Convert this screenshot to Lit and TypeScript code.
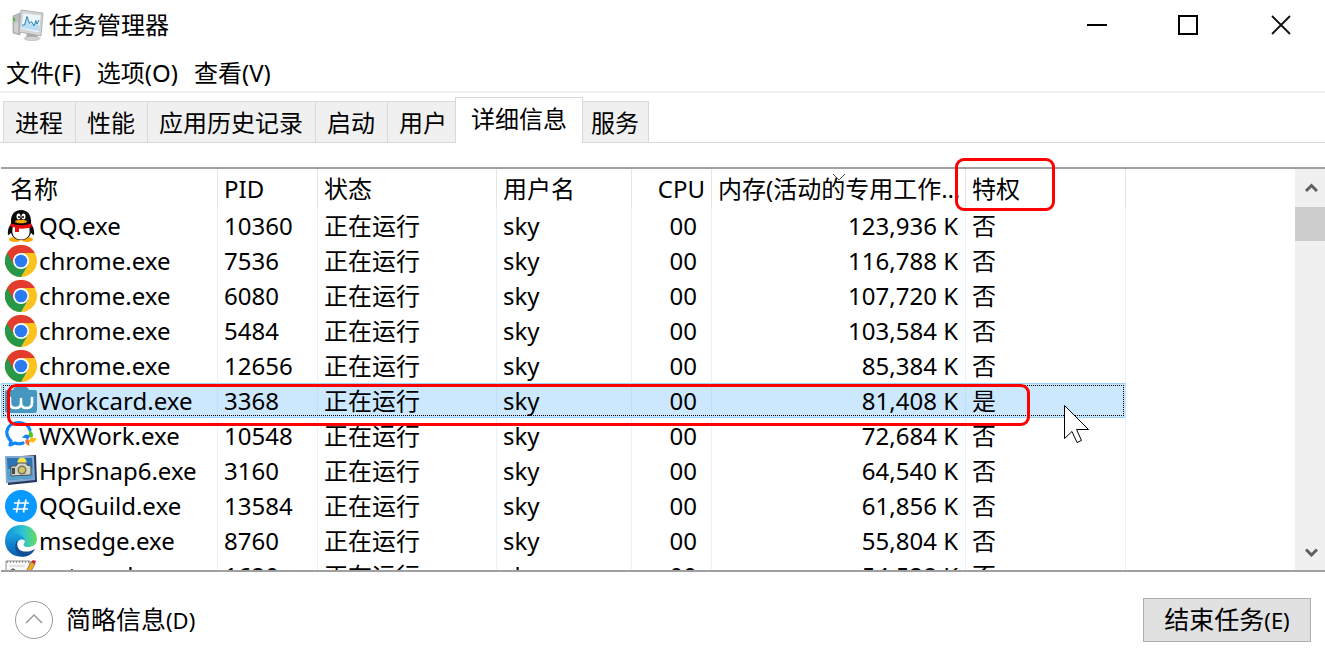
import { LitElement, html, css, svg } from "lit";
import { customElement, property, state } from "lit/decorators.js";
import { classMap } from "lit/directives/class-map.js";

interface Proc {
  icon: string;
  name: string;
  pid: string;
  memory: string;
  elevated: boolean;
}

const PROCESSES: Proc[] = [
  { icon: "qq", name: "QQ.exe", pid: "10360", memory: "123,936 K", elevated: false },
  { icon: "chrome", name: "chrome.exe", pid: "7536", memory: "116,788 K", elevated: false },
  { icon: "chrome", name: "chrome.exe", pid: "6080", memory: "107,720 K", elevated: false },
  { icon: "chrome", name: "chrome.exe", pid: "5484", memory: "103,584 K", elevated: false },
  { icon: "chrome", name: "chrome.exe", pid: "12656", memory: "85,384 K", elevated: false },
  { icon: "workcard", name: "Workcard.exe", pid: "3368", memory: "81,408 K", elevated: true },
  { icon: "wxwork", name: "WXWork.exe", pid: "10548", memory: "72,684 K", elevated: false },
  { icon: "snap", name: "HprSnap6.exe", pid: "3160", memory: "64,540 K", elevated: false },
  { icon: "guild", name: "QQGuild.exe", pid: "13584", memory: "61,856 K", elevated: false },
  { icon: "edge", name: "msedge.exe", pid: "8760", memory: "55,804 K", elevated: false },
  { icon: "note", name: "notepad.exe", pid: "1620", memory: "54,528 K", elevated: false },
];

const ICONS: Record<string, unknown> = {
  qq: svg`
    <ellipse cx="10" cy="29.500" rx="6" ry="2.500" fill="#f9a800"/><ellipse cx="22" cy="29.500" rx="6" ry="2.500" fill="#f9a800"/>
    <path d="M6 14 Q2 19 3 25 Q5 25 7 21ZM26 14 Q30 19 29 25 Q27 25 25 21Z" fill="#0a0a0a"/>
    <path d="M16 0C9 0 6 5 6 11V19C5 25 9 30 16 30S27 25 26 19V11C26 5 23 0 16 0Z" fill="#0a0a0a"/>
    <path d="M8 16H24Q27 29 16 29.500Q5 29 8 16Z" fill="#fff"/>
    <ellipse cx="13.500" cy="6.500" rx="2" ry="3" fill="#fff"/><ellipse cx="18.500" cy="6.500" rx="2" ry="3" fill="#fff"/>
    <circle cx="14" cy="7" r="1" fill="#000"/><circle cx="18" cy="7" r="1" fill="#000"/>
    <ellipse cx="16" cy="11.500" rx="6" ry="1.700" fill="#f9a800"/>
    <path d="M5.500 13.500Q16 17 26.500 13.500V17.500Q20 19 14 18.500V22H10V17.500L5.500 16.500Z" fill="#e60f0f"/>`,
  chrome: svg`
    <circle cx="16" cy="16" r="16" fill="#fcc31e"/>
    <path d="M2.100 8A16 16 0 0 0 16 32L22.900 20 16 16Z" fill="#269847"/>
    <path d="M2.100 8A16 16 0 0 1 29.900 8H16V16L9.100 20Z" fill="#e33b2e"/>
    <circle cx="16" cy="16" r="8" fill="#fff"/><circle cx="16" cy="16" r="6.300" fill="#2a7bef"/>`,
  workcard: svg`
    <path d="M2 5H8Q9 2 12 2H20Q23 2 24 5H30Q32 5 32 7V25Q32 28 29 28H3Q0 28 0 25V7Q0 5 2 5Z" fill="#4597bf"/>
    <path d="M5 13V18Q5 23 10.500 23T16 18V14M16 18Q16 23 21.500 23T27 18V13" fill="none" stroke="#fff" stroke-width="2.600" stroke-linecap="round"/>`,
  wxwork: svg`
    <path d="M25 10C22 0 4 0 2 11C1 16 4 19 6 21L5 25L10 23Q14 24.500 18 23" fill="none" stroke="#1186f5" stroke-width="3.200" stroke-linecap="round" stroke-linejoin="round"/>
    <path d="M24 10Q30 13 27 18L23 16Q25 13 24 10Z" fill="#4fc51f"/><path d="M32 18Q29 25 24 21L26 17Q29 19 32 18Z" fill="#fdbb0a"/>
    <path d="M25 26Q18 24 21 19L25 21Q23 23 25 26Z" fill="#fc6c25"/><path d="M17 18Q20 12 25 16L23 20Q20 17 17 18Z" fill="#1784ef"/>`,
  snap: svg`
    <path d="M2 2 31 0 32 27 3 30Z" fill="#26375c"/><path d="M0 1 29 1 30 25 1 28Z" fill="#82a8d0"/>
    <path d="M2 3H27L28 23 3 25Z" fill="#2c74b4"/><path d="M2 14H28V23L3 25Z" fill="#54a4cf"/>
    <circle cx="17" cy="7" r="4.500" fill="#ffe34a"/><path d="M6 11H11L13 8H21L22 10 26 11V20L6 21Z" fill="#d7d3c1" stroke="#47515a"/>
    <circle cx="17" cy="15" r="4.500" fill="#6d7671"/><circle cx="17" cy="15" r="3" fill="#d6c45c"/><path d="M7 13H10V19H7Z" fill="#424b50"/>`,
  guild: svg`<circle cx="16" cy="16" r="16" fill="#0999ff"/>
    <path d="M14 9.500 11.500 22.500M21 9.500 18.500 22.500M9 13H24M8 19H23" fill="none" stroke="#fff" stroke-width="1.700"/>`,
  edge: svg`
    <defs><linearGradient id="edge-top"><stop stop-color="#1690df"/><stop offset=".55" stop-color="#2cc3d4"/><stop offset="1" stop-color="#68dc5f"/></linearGradient>
    <linearGradient id="edge-left" x2="0" y2="1"><stop stop-color="#1aa5e4"/><stop offset="1" stop-color="#075cb0"/></linearGradient></defs>
    <path d="M0 15C1 5 8 0 16 0C26 0 32 7 32 14C32 20 27 22 23 22C19 22 17 20 20 17C19 9 7 7 0 15Z" fill="url(#edge-top)"/>
    <path d="M0 16C1 8 11 7 17 11Q20 13 20 16C16 12 10 17 12 23Q14 30 21 31C9 34 0 26 0 16Z" fill="url(#edge-left)"/>
    <path d="M13 15C9 27 22 29 30 24C27 30 21 33 16 31C9 28 9 18 13 15Z" fill="#124f96"/>`,
  note: svg`
    <path d="M1 1H25V31H1Z" fill="#fafafa" stroke="#8c8c8c"/><path d="M2 2H25" stroke="#777" stroke-width="1.500" stroke-dasharray="1 2"/>
    <path d="M4 6H20" stroke="#ccc"/><circle cx="8" cy="11" r="2" fill="none" stroke="#222"/>
    <path d="M26 2 30 4 22 19 18 20 19 15Z" fill="#eba928" stroke="#765018" stroke-width=".6"/><path d="M26 2 30 4 31 1 28 0Z" fill="#b92d38"/>`,
};

@customElement("process-icon")
export class ProcessIcon extends LitElement {
  static styles = css`
    :host { display: block; width: 32px; height: 32px; flex: none; }
    .glyph { display: block; width: 100%; height: 100%; }
  `;
  @property() kind = "chrome";
  render() {
    return html`<svg class="glyph" viewBox="0 0 32 32" aria-hidden="true">${ICONS[this.kind]}</svg>`;
  }
}

@customElement("app-root")
export class AppRoot extends LitElement {
  static styles = css`
    :host {
      display: block;
      font: 24px/34px "Noto Sans", "Noto Sans CJK SC", sans-serif;
      color: #000;
    }
    * { box-sizing: border-box; }
    button { font: inherit; color: inherit; border: 0; background: none; padding: 0; margin: 0; }
    .window { position: relative; height: 100vh; display: flex; flex-direction: column; background: #fff; overflow: hidden; }
    .titlebar { display: flex; align-items: center; height: 50px; padding-left: 12px; gap: 5px; flex: none; }
    .logo { width: 32px; height: 32px; }
    .title { font: inherit; margin: 0; flex: 1; }
    .captions { display: flex; margin-right: -2px; }
    .caption { width: 92px; height: 50px; display: grid; place-items: center; }
    .caption svg { width: 22px; height: 22px; }
    .menu { display: flex; gap: 16px; height: 43px; padding: 6px 6px 0; border-bottom: 2px solid #f0f0f0; flex: none; }
    .menu button { height: 34px; }
    .tabs { display: flex; align-items: flex-end; height: 50px; padding-left: 3px; flex: none; box-shadow: inset 0 -1px #d9d9d9; }
    .tab { height: 42px; padding: 2px 12px 0 11px; border: 1px solid #d9d9d9; border-right-width: 0; background: #f0f0f0; white-space: nowrap; }
    .tab:last-child { border-right-width: 1px; padding: 2px 9px 0 8px; border-left: 0; }
    .tab.active { position: relative; height: 46px; margin-left: -4px; padding: 0 15px 4px; border-right-width: 1px; border-bottom: 0; background: #fff; }
    .list { flex: 1; min-height: 0; display: flex; margin: 24px 0 0 1px; border: solid #a0a0a0; border-width: 2px 0; overflow: hidden; }
    .viewport { flex: 1; min-width: 0; overflow: hidden; }
    table { border-collapse: separate; border-spacing: 0; table-layout: fixed; width: 1125px; }
    .c-name { width: 217px; } .c-pid { width: 100px; } .c-status { width: 179px; } .c-user { width: 135px; }
    .c-cpu { width: 80px; } .c-mem { width: 254px; } .c-priv { width: 160px; }
    th, td { padding: 0 6px; text-align: left; font-weight: 400; white-space: nowrap; overflow: hidden; border-right: 1px solid #e8f1fa; }
    th { height: 39px; border-right-color: #e5e5e5; }
    td { height: 35px; }
    th.first { padding-left: 9px; }
    td.first { padding: 0 0 0 4px; }
    th.tight { text-overflow: ellipsis; padding-right: 4px; position: relative; }
    .sort { position: absolute; left: 120px; top: 4px; width: 14px; height: 8px; }
    th.num, td.num { text-align: right; }
    td.mem { padding-right: 7px; }
    td.cpu { padding-right: 14px; }
    .proc { display: flex; align-items: center; gap: 2px; height: 35px; }
    .selected { background: #cce8ff; outline: 1px dotted #000; outline-offset: -3px; box-shadow: inset 0 0 0 1px #99d1ff; }
    .selected td { border-right-color: #c0e0fa; }
    .scroll { width: 30px; padding-left: 1px; background: #f0f0f0; display: flex; flex-direction: column; flex: none; }
    .scroll button { height: 38px; display: grid; place-items: center; }
    .scroll svg { width: 14px; height: 12px; }
    .track { flex: 1; }
    .thumb { height: 34px; margin-left: -1px; background: #cdcdcd; }
    .footer { height: 95px; padding: 0 14px; display: flex; align-items: center; justify-content: space-between; flex: none; font-size: 25px; }
    .fewer { display: flex; align-items: center; gap: 12px; }
    .fewer svg { width: 40px; height: 40px; }
    .key { font-size: 22px; }
    .end { width: 168px; height: 44px; border: 1px solid #adadad; background: #e1e1e1; }
    .mark { position: absolute; border: 3px solid #f00; border-radius: 9px; pointer-events: none; }
    .mark-head { left: 955px; top: 158px; width: 100px; height: 53px; }
    .mark-row { left: 7px; top: 384px; width: 1023px; height: 42px; }
    .cursor { position: absolute; left: 1063px; top: 404px; width: 28px; height: 40px; }
  `;

  @state() private tab = "详细信息";
  @state() private selected = "3368";

  private tabs = ["进程", "性能", "应用历史记录", "启动", "用户", "详细信息", "服务"];

  private renderRow(p: Proc) {
    return html`<tr class=${classMap({ selected: p.pid === this.selected })} @click=${() => (this.selected = p.pid)}>
      <td class="first"><div class="proc"><process-icon .kind=${p.icon}></process-icon><span>${p.name}</span></div></td>
      <td>${p.pid}</td><td>正在运行</td><td>sky</td><td class="num cpu">00</td>
      <td class="num mem">${p.memory}</td><td>${p.elevated ? "是" : "否"}</td>
    </tr>`;
  }

  render() {
    return html`<main class="window">
      <header class="titlebar">
        <svg class="logo" viewBox="0 0 32 32" aria-hidden="true">
          <path d="M1 7 8 4V26L1 24Z" fill="#b9bcbb" stroke="#8f9391" stroke-width=".6"/><path d="M2 9V12" stroke="#42bd32" stroke-width="2"/>
          <path d="M3 14V23M5 13V24" stroke="#e5e5e5"/>
          <path d="M15 24H24L26 29H14Z" fill="#a9a9a9"/><ellipse cx="20" cy="29.500" rx="8" ry="2" fill="#d4d4d4" stroke="#a8a8a8" stroke-width=".5"/>
          <path d="M9 1 31 4 29 27 7 23Z" fill="#d6d6d6" stroke="#a2a2a2" stroke-width=".8"/><path d="M11 4 29 6 27 24 9 20Z" fill="#eef7fc" stroke="#bdc9cf" stroke-width=".5"/>
          <path d="M10 16 12 16 15 8 18 16 20 13 22 17 24 12 27 17V22L10 19Z" fill="#b9ddf2"/><path d="M10 16H12.500L15 7.500 17.500 14.500 19.500 12.500 22 17 24 11.500 25 15 27 11" fill="none" stroke="#2d84b8"/>
        </svg>
        <h1 class="title">任务管理器</h1>
        <div class="captions">
          <button class="caption" aria-label="最小化"><svg viewBox="0 0 22 22"><path d="M1 11H21" stroke="#000" stroke-width="2"/></svg></button>
          <button class="caption" aria-label="最大化"><svg viewBox="0 0 22 22"><path d="M1 2H19V20H1Z" fill="none" stroke="#000" stroke-width="2"/></svg></button>
          <button class="caption" aria-label="关闭"><svg viewBox="0 0 22 22"><path d="M2 2 20 20M20 2 2 20" stroke="#111" stroke-width="1.800"/></svg></button>
        </div>
      </header>
      <nav class="menu"><button>文件(F)</button><button>选项(O)</button><button>查看(V)</button></nav>
      <div class="tabs" role="tablist">
        ${this.tabs.map((t) => html`<button role="tab" aria-selected=${t === this.tab} class=${classMap({ tab: true, active: t === this.tab })} @click=${() => (this.tab = t)}>${t}</button>`)}
      </div>
      <section class="list">
        <div class="viewport">
          <table>
            <colgroup><col class="c-name"><col class="c-pid"><col class="c-status"><col class="c-user"><col class="c-cpu"><col class="c-mem"><col class="c-priv"></colgroup>
            <thead><tr>
              <th class="first">名称</th><th>PID</th><th>状态</th><th>用户名</th><th class="num">CPU</th>
              <th class="tight">内存(活动的专用工作集)<svg class="sort" viewBox="0 0 14 8"><path d="M1 1 7 7 13 1" fill="none" stroke="#555"/></svg></th><th>特权</th>
            </tr></thead>
            <tbody>${PROCESSES.map((p) => this.renderRow(p))}</tbody>
          </table>
        </div>
        <div class="scroll">
          <button aria-label="向上滚动"><svg viewBox="0 0 14 12"><path d="M2 9 7.500 3.500 13 9" fill="none" stroke="#606060" stroke-width="3"/></svg></button>
          <div class="thumb"></div><div class="track"></div>
          <button aria-label="向下滚动"><svg viewBox="0 0 14 12"><path d="M2 4.500 7.500 10 13 4.500" fill="none" stroke="#606060" stroke-width="3"/></svg></button>
        </div>
      </section>
      <footer class="footer">
        <button class="fewer"><svg viewBox="0 0 40 40" aria-hidden="true"><circle cx="20" cy="20" r="18.500" fill="none" stroke="#999"/><path d="M12 23 20 15 28 23" fill="none" stroke="#999" stroke-width="1.500"/></svg><span>简略信息<span class="key">(D)</span></span></button>
        <button class="end">结束任务<span class="key">(E)</span></button>
      </footer>
      <div class="mark mark-head"></div>
      <div class="mark mark-row"></div>
      <svg class="cursor" viewBox="0 0 28 40" aria-hidden="true"><path d="M1.500 1.500V34.500L9 27.500 14 38.500 18.500 36.500 13.500 25.500H25.500Z" fill="#fff" stroke="#000"/></svg>
    </main>`;
  }
}
